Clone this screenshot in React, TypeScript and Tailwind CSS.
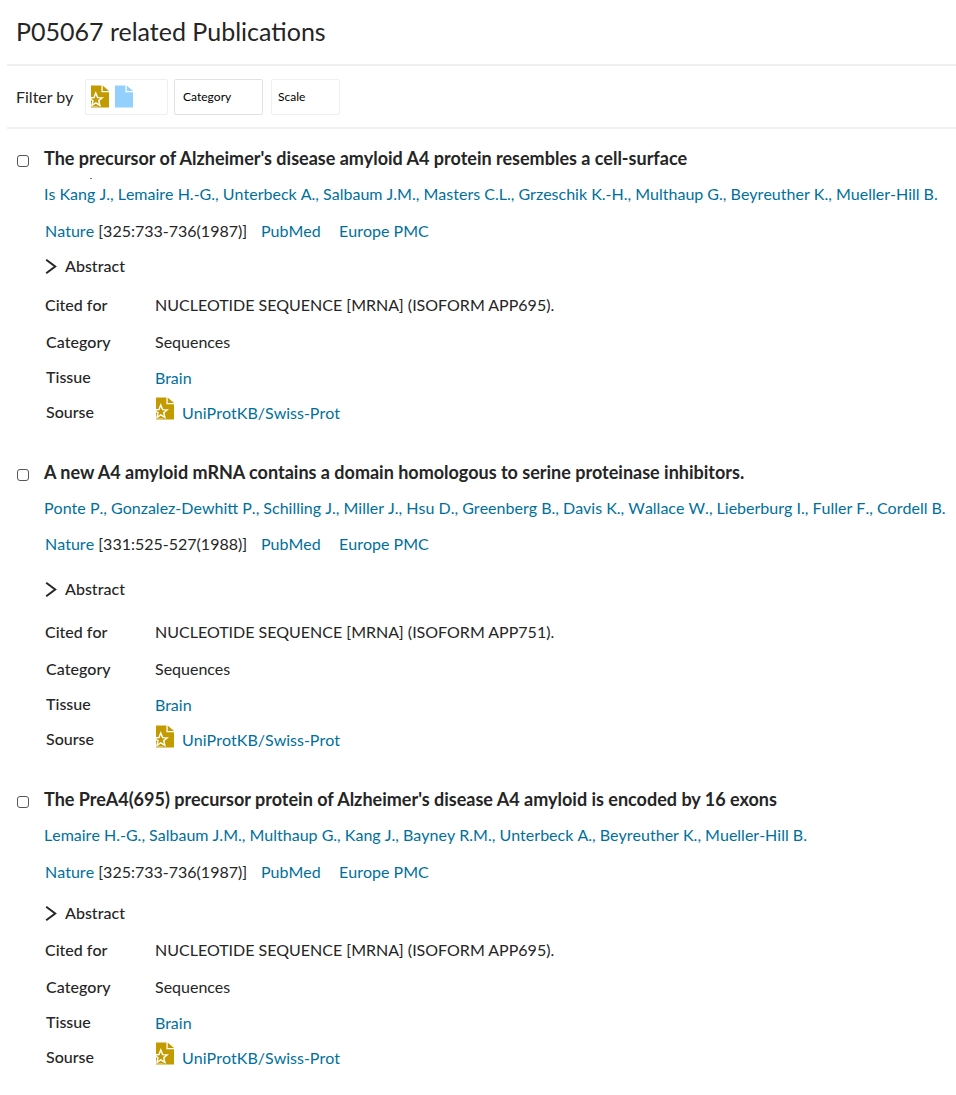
type Publication = {
  title: string;
  clipped?: boolean;
  authors: string;
  issue: string;
  citedFor: string;
  spacing: string;
  journalGap: string;
  abstractGap: string;
  detailsGap: string;
  iconOffset: string;
};

const publications: Publication[] = [
  {
    title: "The precursor of Alzheimer's disease amyloid A4 protein resembles a cell-surface",
    clipped: true,
    authors:
      'Is Kang J., Lemaire H.-G., Unterbeck A., Salbaum J.M., Masters C.L., Grzeschik K.-H., Multhaup G., Beyreuther K., Mueller-Hill B.',
    issue: '[325:733-736(1987)]',
    citedFor: 'NUCLEOTIDE SEQUENCE [MRNA] (ISOFORM APP695).',
    spacing: 'pt-[19px]',
    journalGap: 'mt-[17px]',
    abstractGap: 'mt-[15px]',
    detailsGap: 'mt-[19px]',
    iconOffset: '-mt-1.5',
  },
  {
    title: 'A new A4 amyloid mRNA contains a domain homologous to serine proteinase inhibitors.',
    authors:
      'Ponte P., Gonzalez-Dewhitt P., Schilling J., Miller J., Hsu D., Greenberg B., Davis K., Wallace W., Lieberburg I., Fuller F., Cordell B.',
    issue: '[331:525-527(1988)]',
    citedFor: 'NUCLEOTIDE SEQUENCE [MRNA] (ISOFORM APP751).',
    spacing: 'pt-[39px]',
    journalGap: 'mt-4',
    abstractGap: 'mt-[25px]',
    detailsGap: 'mt-[23px]',
    iconOffset: '-mt-[5px]',
  },
  {
    title: "The PreA4(695) precursor protein of Alzheimer's disease A4 amyloid is encoded by 16 exons",
    authors:
      'Lemaire H.-G., Salbaum J.M., Multhaup G., Kang J., Bayney R.M., Unterbeck A., Beyreuther K., Mueller-Hill B.',
    issue: '[325:733-736(1987)]',
    citedFor: 'NUCLEOTIDE SEQUENCE [MRNA] (ISOFORM APP695).',
    spacing: 'pt-[39px]',
    journalGap: 'mt-[17px]',
    abstractGap: 'mt-[21px]',
    detailsGap: 'mt-[17px]',
    iconOffset: '-mt-1.5',
  },
];

function ReviewedIcon() {
  return (
    <svg width="18" height="23" viewBox="0 0 18 23" className="block shrink-0">
      <path d="M0 .5h10.4v6.7H18v15.3H0z" fill="#c39b00" />
      <path d="M11.7.5 18 6H11.7z" fill="#c39b00" />
      <path
        d="M4.8 8 6.6 12.6 11.2 12.9 7.7 15.8 8.9 20.4 4.8 17.9.9 20.4 2 15.8-1.8 12.9 3 12.6z"
        fill="#c39b00"
        stroke="#fff"
        strokeWidth="1.4"
      />
      <path d="M.5 21.6h6.5" fill="none" stroke="#fff" strokeOpacity=".6" strokeWidth=".7" />
    </svg>
  );
}

function UnreviewedIcon() {
  return (
    <svg width="18" height="23" viewBox="0 0 18 23" className="block shrink-0">
      <path d="M0 .5h10.4v6.7H18v15.3H0z" fill="#94d0fe" />
      <path d="M11.7.5 18 6H11.7z" fill="#94d0fe" />
    </svg>
  );
}

function Entry({ item }: { item: Publication }) {
  return (
    <article className={`flex ${item.spacing}`}>
      <div className="w-11 shrink-0 pt-[7px] pl-[17px]">
        <span className="block h-3 w-3 rounded-[3px] border border-[#55555b] bg-white" />
      </div>
      <div className="min-w-0 flex-1 whitespace-nowrap">
        <div className="h-9">
          <h2 className="h-5 text-lg leading-5 font-bold [font-kerning:normal]">{item.title}</h2>
          {item.clipped && <div className="mt-[10px] ml-[46px] h-px w-[2px] bg-[#777]" />}
        </div>
        <div className="h-5 text-[#00709b]">{item.authors}</div>
        <div className={`ml-px flex h-5 ${item.journalGap}`}>
          <div className="w-[216px]">
            <a className="text-[#00709b]">Nature</a> {item.issue}
          </div>
          <a className="w-[78px] text-[#00709b]">PubMed</a>
          <a className="text-[#00709b]">Europe PMC</a>
        </div>
        <div className={`flex h-5 items-center font-medium ${item.abstractGap}`}>
          <svg width="21" height="16" viewBox="0 0 21 16" fill="none">
            <path d="M2.2 1.8 11.2 8.5 2.2 15.2" stroke="#252525" strokeWidth="2" />
          </svg>
          Abstract
        </div>
        <div className={`flex ${item.detailsGap}`}>
          <dl className="w-[111px] font-medium">
            <dt className="ml-px h-[37px]">Cited for</dt>
            <dt className="ml-0.5 h-[35px]">Category</dt>
            <dt className="ml-0.5 h-[35px]">Tissue</dt>
            <dt className="ml-0.5 h-5">Sourse</dt>
          </dl>
          <div>
            <div className="h-[37px] [font-kerning:normal]">{item.citedFor}</div>
            <div className="h-9 [font-kerning:normal]">Sequences</div>
            <div className="h-[35px] text-[#00709b] [font-kerning:normal]">Brain</div>
            <div className="flex h-5 gap-2 text-[#00709b]">
              <div className={`ml-px ${item.iconOffset}`}>
                <ReviewedIcon />
              </div>
              <a>UniProtKB/Swiss-Prot</a>
            </div>
          </div>
        </div>
      </div>
    </article>
  );
}

export default function App() {
  return (
    <main className="h-[1095px] w-[956px] overflow-hidden bg-white font-['Lato',sans-serif] text-base leading-5 text-[#252525] [font-kerning:none]">
      <header className="ml-[7px] h-[66px] border-b-2 border-[#efefef] pt-[15px] pl-[9px]">
        <h1 className="text-[25px] leading-8 [font-kerning:normal]">P05067 related Publications</h1>
      </header>
      <div className="ml-[7px] flex h-[63px] items-center border-b-2 border-[#efefef] pl-[9px]">
        <span className="w-[69px] [font-kerning:normal]">Filter by</span>
        <div className="flex h-9 w-[83px] items-center gap-[6px] rounded-[2px] border border-[#efefef] pl-[5px]">
          <ReviewedIcon />
          <UnreviewedIcon />
        </div>
        <div className="ml-[6px] flex h-9 w-[89px] items-center rounded-[2px] border border-[#e2e2e2] pl-2 text-xs text-black">
          Category
        </div>
        <div className="ml-2 flex h-9 w-[69px] items-center rounded-[2px] border border-[#efefef] pl-[6px] text-xs text-black">
          Scale
        </div>
      </div>
      {publications.map((item) => (
        <Entry key={item.title} item={item} />
      ))}
    </main>
  );
}
